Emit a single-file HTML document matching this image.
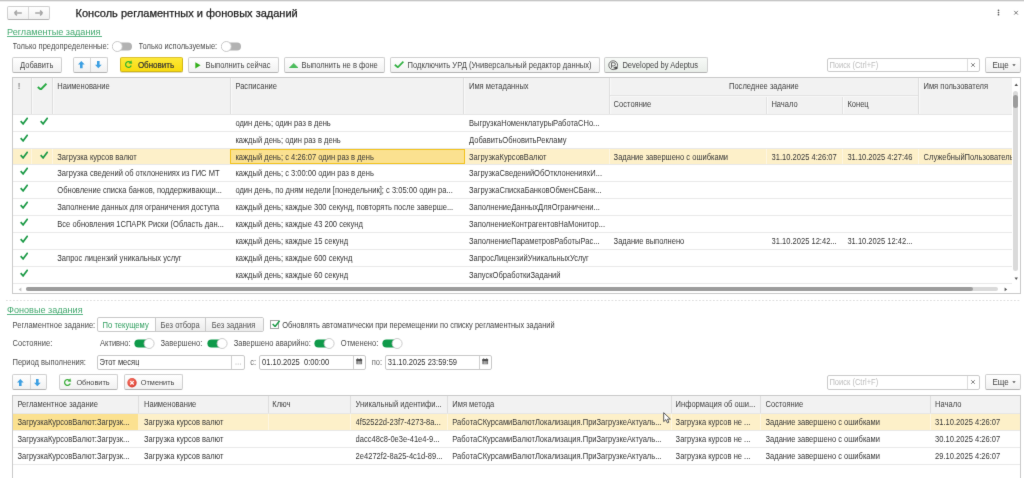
<!DOCTYPE html>
<html><head><meta charset="utf-8"><title>Консоль регламентных и фоновых заданий</title>
<style>
html,body{margin:0;padding:0;}
body{width:1024px;height:478px;position:relative;overflow:hidden;background:#fff;font-family:"Liberation Sans",sans-serif;font-size:7.5px;color:#4a4a4a;}
body>div,body>svg{position:absolute;}
#wrap{position:absolute;left:0;top:0;width:1024px;height:478px;overflow:hidden;filter:url(#bl);}
#wrap>div{position:absolute;}
</style></head><body><svg width="0" height="0" style="position:absolute;left:0;top:0"><filter id="bl" x="0" y="0" width="100%" height="100%" color-interpolation-filters="sRGB"><feConvolveMatrix order="3" kernelMatrix="0.0064 0.0672 0.0064 0.0672 0.7056 0.0672 0.0064 0.0672 0.0064" edgeMode="duplicate"/></filter></svg><div id="wrap">
<div style="left:0px;top:0px;width:1024px;height:1px;background:#c6c6c6;"></div>
<div style="left:0px;top:1px;width:1024px;height:1px;background:#ededed;"></div>
<div style="left:7px;top:6px;width:43px;height:14px;border:1px solid #d0d0d0;border-bottom-color:#b3b3b3;border-radius:2px;background:linear-gradient(#ffffff,#f1f1f1);box-sizing:border-box;"></div>
<div style="left:28px;top:7px;width:1px;height:12px;background:#d8d8d8;"></div>
<svg style="position:absolute;left:13px;top:9px;" width="10" height="8" viewBox="0 0 10 8"><path d="M1.4 4 L3.9 1.7 M1.4 4 L3.9 6.3 M1.6 4 H8.8" stroke="#a6a6a6" stroke-width="1.6" fill="none"/></svg>
<svg style="position:absolute;left:34px;top:9px;" width="10" height="8" viewBox="0 0 10 8"><path d="M8.6 4 L6.1 1.7 M8.6 4 L6.1 6.3 M8.4 4 H1.2" stroke="#a6a6a6" stroke-width="1.6" fill="none"/></svg>
<div style="left:75.6px;top:3px;line-height:20px;font-size:11px;color:#222;white-space:pre;overflow:hidden;-webkit-text-stroke:0.25px #222;">Консоль регламентных и фоновых заданий</div>
<svg style="position:absolute;left:996px;top:9px;" width="5" height="8" viewBox="0 0 5 8"><circle cx="2.5" cy="1.3" r="0.85" fill="#606060"/><circle cx="2.5" cy="3.5" r="0.85" fill="#606060"/><circle cx="2.5" cy="5.7" r="0.85" fill="#606060"/></svg>
<svg style="position:absolute;left:1013px;top:9.5px;" width="6" height="6" viewBox="0 0 6 6"><path d="M1.2 0.9 L4.9 4.6 M4.9 0.9 L1.2 4.6" stroke="#6a6a6a" stroke-width="0.9"/></svg>
<div style="left:7px;top:22px;line-height:20px;font-size:9.1px;color:#43a96f;white-space:pre;overflow:hidden;">Регламентые задания</div>
<div style="left:7px;top:36px;width:95px;height:1px;background:#5db686;"></div>
<div style="left:12.5px;top:37px;line-height:20px;font-size:7.55px;color:#4c4c4c;white-space:pre;overflow:hidden;transform:scaleY(1.1);transform-origin:0 12px;">Только предопределенные:</div>
<svg style="position:absolute;left:111.5px;top:40.5px;" width="22" height="12" viewBox="0 0 22 12"><rect x="4" y="1.6" width="16" height="7.8" rx="3.9" fill="#b2b2b2"/><circle cx="5.3" cy="5.5" r="5" fill="#fff" stroke="#c3c3c3" stroke-width="0.9"/></svg>
<div style="left:138.5px;top:37px;line-height:20px;font-size:7.55px;color:#4c4c4c;white-space:pre;overflow:hidden;transform:scaleY(1.1);transform-origin:0 12px;">Только используемые:</div>
<svg style="position:absolute;left:220.7px;top:40.5px;" width="22" height="12" viewBox="0 0 22 12"><rect x="4" y="1.6" width="16" height="7.8" rx="3.9" fill="#b2b2b2"/><circle cx="5.3" cy="5.5" r="5" fill="#fff" stroke="#c3c3c3" stroke-width="0.9"/></svg>
<div style="left:12px;top:57px;width:50px;height:16px;border:1px solid #d0d0d0;border-bottom-color:#b3b3b3;border-radius:2px;background:linear-gradient(#ffffff,#f1f1f1);box-sizing:border-box;"></div>
<div style="left:20px;top:56px;line-height:20px;font-size:7.55px;color:#474747;white-space:pre;overflow:hidden;transform:scaleY(1.1);transform-origin:0 12px;">Добавить</div>
<div style="left:73px;top:57px;width:35px;height:16px;border:1px solid #d0d0d0;border-bottom-color:#b3b3b3;border-radius:2px;background:linear-gradient(#ffffff,#f1f1f1);box-sizing:border-box;"></div>
<div style="left:90px;top:58px;width:1px;height:14px;background:#d6d6d6;"></div>
<svg style="position:absolute;left:78.2px;top:61.0px;" width="7" height="7.5" viewBox="0 0 7 7.5"><path d="M3.3 0 L6.7 3.6 H4.6 V7.3 H2.0 V3.6 H-0.1 Z" fill="#3c9fe2"/></svg>
<svg style="position:absolute;left:95.3px;top:61.0px;" width="7" height="7.5" viewBox="0 0 7 7.5"><path d="M3.3 7.3 L6.7 3.7 H4.6 V0 H2.0 V3.7 H-0.1 Z" fill="#3c9fe2"/></svg>
<div style="left:120px;top:57px;width:63px;height:15px;border:1px solid #d2b714;border-top-color:#dcc235;border-radius:2px;background:linear-gradient(#fde838,#f8db10);box-sizing:border-box;box-shadow:0 1px 0 rgba(120,100,0,0.25);"></div>
<svg style="position:absolute;left:124.1px;top:60.1px;" width="10" height="10" viewBox="0 0 10 10"><path d="M7.23 5.49 A2.9 2.9 0 1 1 6.36 2.28" stroke="#2eb22e" stroke-width="1.15" fill="none"/><path d="M7.9 3.55 L7.25 0.7 L4.95 3.3 Z" fill="#2eb22e" stroke="#2eb22e" stroke-width="0.4" stroke-linejoin="round"/></svg>
<div style="left:137.9px;top:56px;line-height:20px;font-size:8.0px;color:#333;white-space:pre;overflow:hidden;transform:scaleY(1.1);transform-origin:0 12px;-webkit-text-stroke:0.18px #333;">Обновить</div>
<div style="left:188px;top:57px;width:91px;height:16px;border:1px solid #d0d0d0;border-bottom-color:#b3b3b3;border-radius:2px;background:linear-gradient(#ffffff,#f1f1f1);box-sizing:border-box;"></div>
<svg style="position:absolute;left:194.8px;top:61.6px;" width="6" height="7" viewBox="0 0 6 7"><path d="M0.3 0.2 L5.6 3.3 L0.3 6.4 Z" fill="#35b01c"/></svg>
<div style="left:205.6px;top:56px;line-height:20px;font-size:7.55px;color:#474747;white-space:pre;overflow:hidden;transform:scaleY(1.1);transform-origin:0 12px;">Выполнить сейчас</div>
<div style="left:284px;top:57px;width:101px;height:16px;border:1px solid #d0d0d0;border-bottom-color:#b3b3b3;border-radius:2px;background:linear-gradient(#ffffff,#f1f1f1);box-sizing:border-box;"></div>
<svg style="position:absolute;left:288.8px;top:62.5px;" width="9.5" height="5.5" viewBox="0 0 9.5 5.5"><path d="M4.75 0.4 L9.1 4.9 H0.4 Z" fill="#4cbd5c" stroke="#44b554" stroke-width="0.7" stroke-linejoin="round"/></svg>
<div style="left:301.6px;top:56px;line-height:20px;font-size:7.55px;color:#474747;white-space:pre;overflow:hidden;transform:scaleY(1.1);transform-origin:0 12px;">Выполнить не в фоне</div>
<div style="left:390px;top:57px;width:210px;height:16px;border:1px solid #d0d0d0;border-bottom-color:#b3b3b3;border-radius:2px;background:linear-gradient(#ffffff,#f1f1f1);box-sizing:border-box;"></div>
<svg style="position:absolute;left:393.8px;top:60.8px;" width="10" height="7.3" viewBox="0 0 10 7.3"><path d="M0.80 3.80 L3.80 6.28 L9.40 0.73" stroke="#34b144" stroke-width="1.75" fill="none"/></svg>
<div style="left:407.6px;top:56px;line-height:20px;font-size:7.55px;color:#474747;white-space:pre;overflow:hidden;transform:scaleY(1.1);transform-origin:0 12px;">Подключить УРД (Универсальный редактор данных)</div>
<div style="left:604px;top:57px;width:104px;height:16px;border:1px solid #d0d0d0;border-bottom-color:#b3b3b3;border-radius:2px;background:linear-gradient(#f7faf7,#e9eee9);box-sizing:border-box;"></div>
<svg style="position:absolute;left:608.2px;top:59.6px;" width="11" height="11" viewBox="0 0 11 11"><circle cx="5.2" cy="5.2" r="4.4" stroke="#6a6a6a" stroke-width="1" fill="none"/><path d="M3.5 7.8 V2.7 H5.8 A1.6 1.6 0 0 1 5.8 5.9 H3.5" stroke="#6a6a6a" stroke-width="1" fill="none"/><path d="M5.6 7.9 H8.8 M7.5 6.6 L9.2 7.9 L7.5 9.2" stroke="#444" stroke-width="1.1" fill="none"/></svg>
<div style="left:622.4px;top:56px;line-height:20px;font-size:7.55px;color:#474747;white-space:pre;overflow:hidden;transform:scaleY(1.1);transform-origin:0 12px;">Developed by Adeptus</div>
<div style="left:827px;top:58px;width:153px;height:14px;border:1px solid #cbcbcb;border-radius:2px;background:#fff;box-sizing:border-box;"></div>
<div style="left:967px;top:59px;width:1px;height:12px;background:#dddddd;"></div>
<svg style="position:absolute;left:970px;top:62px;" width="6" height="6" viewBox="0 0 6 6"><path d="M1.2 1.2 L4.8 4.8 M4.8 1.2 L1.2 4.8" stroke="#777" stroke-width="0.9"/></svg>
<div style="left:829.4px;top:56px;line-height:20px;font-size:7.55px;color:#bdbdbd;white-space:pre;overflow:hidden;transform:scaleY(1.1);transform-origin:0 12px;">Поиск (Ctrl+F)</div>
<div style="left:985px;top:57px;width:36px;height:16px;border:1px solid #d0d0d0;border-bottom-color:#b3b3b3;border-radius:2px;background:linear-gradient(#ffffff,#f1f1f1);box-sizing:border-box;"></div>
<div style="left:992.5px;top:56px;line-height:20px;font-size:8px;color:#444;white-space:pre;overflow:hidden;transform:scaleY(1.1);transform-origin:0 12px;">Еще</div>
<svg style="position:absolute;left:1012.3px;top:64.3px;" width="4" height="3" viewBox="0 0 4 3"><path d="M0.3 0.3 H3.7 L2 2.3 Z" fill="#555"/></svg>
<div style="left:12px;top:77px;width:1009px;height:217px;border:1px solid #cacaca;box-sizing:border-box;background:#fff;"></div>
<div style="left:13px;top:78px;width:999px;height:36px;background:#f2f2f2;"></div>
<div style="left:13px;top:114px;width:999px;height:1px;background:#e6e6e6;"></div>
<div style="left:31px;top:78px;width:1px;height:36px;background:#dedede;"></div>
<div style="left:32px;top:78px;width:1px;height:36px;background:#f9f9f9;"></div>
<div style="left:52px;top:78px;width:1px;height:36px;background:#dedede;"></div>
<div style="left:53px;top:78px;width:1px;height:36px;background:#f9f9f9;"></div>
<div style="left:230px;top:78px;width:1px;height:36px;background:#dedede;"></div>
<div style="left:231px;top:78px;width:1px;height:36px;background:#f9f9f9;"></div>
<div style="left:463px;top:78px;width:1px;height:36px;background:#dedede;"></div>
<div style="left:464px;top:78px;width:1px;height:36px;background:#f9f9f9;"></div>
<div style="left:609px;top:78px;width:1px;height:36px;background:#dedede;"></div>
<div style="left:610px;top:78px;width:1px;height:36px;background:#f9f9f9;"></div>
<div style="left:918px;top:78px;width:1px;height:36px;background:#dedede;"></div>
<div style="left:919px;top:78px;width:1px;height:36px;background:#f9f9f9;"></div>
<div style="left:610px;top:95px;width:308px;height:1px;background:#e3e3e3;"></div>
<div style="left:610px;top:96px;width:308px;height:1px;background:#f7f7f7;"></div>
<div style="left:766px;top:97px;width:1px;height:17px;background:#e2e2e2;"></div>
<div style="left:767px;top:97px;width:1px;height:17px;background:#f9f9f9;"></div>
<div style="left:842px;top:97px;width:1px;height:17px;background:#e2e2e2;"></div>
<div style="left:843px;top:97px;width:1px;height:17px;background:#f9f9f9;"></div>
<div style="left:18px;top:77px;line-height:20px;font-size:7.55px;color:#474747;white-space:pre;overflow:hidden;transform:scaleY(1.1);transform-origin:0 12px;">!</div>
<svg style="position:absolute;left:37.2px;top:82.6px;" width="10" height="7.6" viewBox="0 0 10 7.6"><path d="M0.80 3.95 L3.80 6.54 L9.40 0.76" stroke="#2aab45" stroke-width="1.9" fill="none"/></svg>
<div style="left:57.3px;top:77px;line-height:20px;font-size:7.55px;color:#424242;white-space:pre;overflow:hidden;transform:scaleY(1.1);transform-origin:0 12px;">Наименование</div>
<div style="left:235.4px;top:77px;line-height:20px;font-size:7.55px;color:#424242;white-space:pre;overflow:hidden;transform:scaleY(1.1);transform-origin:0 12px;">Расписание</div>
<div style="left:469px;top:77px;line-height:20px;font-size:7.55px;color:#424242;white-space:pre;overflow:hidden;transform:scaleY(1.1);transform-origin:0 12px;">Имя метаданных</div>
<div style="left:729px;top:77px;line-height:20px;font-size:7.55px;color:#424242;white-space:pre;overflow:hidden;transform:scaleY(1.1);transform-origin:0 12px;">Последнее задание</div>
<div style="left:923.5px;top:77px;line-height:20px;font-size:7.55px;color:#424242;white-space:pre;overflow:hidden;transform:scaleY(1.1);transform-origin:0 12px;">Имя пользователя</div>
<div style="left:613.6px;top:95px;line-height:20px;font-size:7.55px;color:#424242;white-space:pre;overflow:hidden;transform:scaleY(1.1);transform-origin:0 12px;">Состояние</div>
<div style="left:771.4px;top:95px;line-height:20px;font-size:7.55px;color:#424242;white-space:pre;overflow:hidden;transform:scaleY(1.1);transform-origin:0 12px;">Начало</div>
<div style="left:847.4px;top:95px;line-height:20px;font-size:7.55px;color:#424242;white-space:pre;overflow:hidden;transform:scaleY(1.1);transform-origin:0 12px;">Конец</div>
<div style="left:13px;top:131px;width:999px;height:1px;background:#e9e9e9;"></div>
<svg style="position:absolute;left:19.7px;top:117.0px;" width="8.2" height="8" viewBox="0 0 8.2 8"><path d="M0.66 4.16 L3.12 6.88 L7.71 0.80" stroke="#1e9b48" stroke-width="1.7" fill="none"/></svg>
<svg style="position:absolute;left:39.5px;top:117.0px;" width="8.2" height="8" viewBox="0 0 8.2 8"><path d="M0.66 4.16 L3.12 6.88 L7.71 0.80" stroke="#1e9b48" stroke-width="1.7" fill="none"/></svg>
<div style="left:235.4px;top:114px;width:226.6px;line-height:20px;font-size:7.55px;color:#363636;white-space:pre;overflow:hidden;transform:scaleY(1.1);transform-origin:0 12px;">один день; один раз в день</div>
<div style="left:469px;top:114px;width:139px;line-height:20px;font-size:7.55px;color:#363636;white-space:pre;overflow:hidden;transform:scaleY(1.1);transform-origin:0 12px;">ВыгрузкаНоменклатурыРаботаСНо...</div>
<div style="left:13px;top:148px;width:999px;height:1px;background:#e9e9e9;"></div>
<svg style="position:absolute;left:19.7px;top:134.0px;" width="8.2" height="8" viewBox="0 0 8.2 8"><path d="M0.66 4.16 L3.12 6.88 L7.71 0.80" stroke="#1e9b48" stroke-width="1.7" fill="none"/></svg>
<div style="left:235.4px;top:131px;width:226.6px;line-height:20px;font-size:7.55px;color:#363636;white-space:pre;overflow:hidden;transform:scaleY(1.1);transform-origin:0 12px;">каждый день; один раз в день</div>
<div style="left:469px;top:131px;width:139px;line-height:20px;font-size:7.55px;color:#363636;white-space:pre;overflow:hidden;transform:scaleY(1.1);transform-origin:0 12px;">ДобавитьОбновитьРекламу</div>
<div style="left:13px;top:149px;width:999px;height:15px;background:#fdf0c9;"></div>
<div style="left:31px;top:149px;width:1px;height:15px;background:#fdf6e2;"></div>
<div style="left:52px;top:149px;width:1px;height:15px;background:#fdf6e2;"></div>
<div style="left:609px;top:149px;width:1px;height:15px;background:#fdf6e2;"></div>
<div style="left:766px;top:149px;width:1px;height:15px;background:#fdf6e2;"></div>
<div style="left:842px;top:149px;width:1px;height:15px;background:#fdf6e2;"></div>
<div style="left:918px;top:149px;width:1px;height:15px;background:#fdf6e2;"></div>
<div style="left:230px;top:149px;width:235px;height:15px;background:#fbe190;border:1px solid #f2c21c;box-sizing:border-box;"></div>
<div style="left:13px;top:164px;width:999px;height:1px;background:#e9e9e9;"></div>
<svg style="position:absolute;left:19.7px;top:151.0px;" width="8.2" height="8" viewBox="0 0 8.2 8"><path d="M0.66 4.16 L3.12 6.88 L7.71 0.80" stroke="#1e9b48" stroke-width="1.7" fill="none"/></svg>
<svg style="position:absolute;left:39.5px;top:151.0px;" width="8.2" height="8" viewBox="0 0 8.2 8"><path d="M0.66 4.16 L3.12 6.88 L7.71 0.80" stroke="#1e9b48" stroke-width="1.7" fill="none"/></svg>
<div style="left:57.3px;top:148px;width:171.7px;line-height:20px;font-size:7.55px;color:#363636;white-space:pre;overflow:hidden;transform:scaleY(1.1);transform-origin:0 12px;">Загрузка курсов валют</div>
<div style="left:235.4px;top:148px;width:226.6px;line-height:20px;font-size:7.55px;color:#363636;white-space:pre;overflow:hidden;transform:scaleY(1.1);transform-origin:0 12px;">каждый день; с 4:26:07 один раз в день</div>
<div style="left:469px;top:148px;width:139px;line-height:20px;font-size:7.55px;color:#363636;white-space:pre;overflow:hidden;transform:scaleY(1.1);transform-origin:0 12px;">ЗагрузкаКурсовВалют</div>
<div style="left:613.6px;top:148px;width:151.39999999999998px;line-height:20px;font-size:7.55px;color:#363636;white-space:pre;overflow:hidden;transform:scaleY(1.1);transform-origin:0 12px;">Задание завершено с ошибками</div>
<div style="left:771.6px;top:148px;width:69.39999999999998px;line-height:20px;font-size:7.55px;color:#363636;white-space:pre;overflow:hidden;transform:scaleY(1.1);transform-origin:0 12px;">31.10.2025 4:26:07</div>
<div style="left:847.4px;top:148px;width:69.60000000000002px;line-height:20px;font-size:7.55px;color:#363636;white-space:pre;overflow:hidden;transform:scaleY(1.1);transform-origin:0 12px;">31.10.2025 4:27:46</div>
<div style="left:923.6px;top:148px;width:88.39999999999998px;line-height:20px;font-size:7.55px;color:#363636;white-space:pre;overflow:hidden;transform:scaleY(1.1);transform-origin:0 12px;">СлужебныйПользователь</div>
<div style="left:13px;top:181px;width:999px;height:1px;background:#e9e9e9;"></div>
<svg style="position:absolute;left:19.7px;top:167.0px;" width="8.2" height="8" viewBox="0 0 8.2 8"><path d="M0.66 4.16 L3.12 6.88 L7.71 0.80" stroke="#1e9b48" stroke-width="1.7" fill="none"/></svg>
<div style="left:57.3px;top:164px;width:171.7px;line-height:20px;font-size:7.55px;color:#363636;white-space:pre;overflow:hidden;transform:scaleY(1.1);transform-origin:0 12px;">Загрузка сведений об отклонениях из ГИС МТ</div>
<div style="left:235.4px;top:164px;width:226.6px;line-height:20px;font-size:7.55px;color:#363636;white-space:pre;overflow:hidden;transform:scaleY(1.1);transform-origin:0 12px;">каждый день; с 3:00:00 один раз в день</div>
<div style="left:469px;top:164px;width:139px;line-height:20px;font-size:7.55px;color:#363636;white-space:pre;overflow:hidden;transform:scaleY(1.1);transform-origin:0 12px;">ЗагрузкаСведенийОбОтклоненияхИ...</div>
<div style="left:13px;top:198px;width:999px;height:1px;background:#e9e9e9;"></div>
<svg style="position:absolute;left:19.7px;top:184.0px;" width="8.2" height="8" viewBox="0 0 8.2 8"><path d="M0.66 4.16 L3.12 6.88 L7.71 0.80" stroke="#1e9b48" stroke-width="1.7" fill="none"/></svg>
<div style="left:57.3px;top:181px;width:171.7px;line-height:20px;font-size:7.55px;color:#363636;white-space:pre;overflow:hidden;transform:scaleY(1.1);transform-origin:0 12px;">Обновление списка банков, поддерживающи...</div>
<div style="left:235.4px;top:181px;width:226.6px;line-height:20px;font-size:7.55px;color:#363636;white-space:pre;overflow:hidden;transform:scaleY(1.1);transform-origin:0 12px;">один день, по дням недели [понедельник]; с 3:05:00 один ра...</div>
<div style="left:469px;top:181px;width:139px;line-height:20px;font-size:7.55px;color:#363636;white-space:pre;overflow:hidden;transform:scaleY(1.1);transform-origin:0 12px;">ЗагрузкаСпискаБанковОбменСБанк...</div>
<div style="left:13px;top:215px;width:999px;height:1px;background:#e9e9e9;"></div>
<svg style="position:absolute;left:19.7px;top:201.0px;" width="8.2" height="8" viewBox="0 0 8.2 8"><path d="M0.66 4.16 L3.12 6.88 L7.71 0.80" stroke="#1e9b48" stroke-width="1.7" fill="none"/></svg>
<div style="left:57.3px;top:198px;width:171.7px;line-height:20px;font-size:7.55px;color:#363636;white-space:pre;overflow:hidden;transform:scaleY(1.1);transform-origin:0 12px;">Заполнение данных для ограничения доступа</div>
<div style="left:235.4px;top:198px;width:226.6px;line-height:20px;font-size:7.55px;color:#363636;white-space:pre;overflow:hidden;transform:scaleY(1.1);transform-origin:0 12px;">каждый день; каждые 300 секунд, повторять после заверше...</div>
<div style="left:469px;top:198px;width:139px;line-height:20px;font-size:7.55px;color:#363636;white-space:pre;overflow:hidden;transform:scaleY(1.1);transform-origin:0 12px;">ЗаполнениеДанныхДляОграничени...</div>
<div style="left:13px;top:232px;width:999px;height:1px;background:#e9e9e9;"></div>
<svg style="position:absolute;left:19.7px;top:218.0px;" width="8.2" height="8" viewBox="0 0 8.2 8"><path d="M0.66 4.16 L3.12 6.88 L7.71 0.80" stroke="#1e9b48" stroke-width="1.7" fill="none"/></svg>
<div style="left:57.3px;top:215px;width:171.7px;line-height:20px;font-size:7.55px;color:#363636;white-space:pre;overflow:hidden;transform:scaleY(1.1);transform-origin:0 12px;">Все обновления 1СПАРК Риски (Область дан...</div>
<div style="left:235.4px;top:215px;width:226.6px;line-height:20px;font-size:7.55px;color:#363636;white-space:pre;overflow:hidden;transform:scaleY(1.1);transform-origin:0 12px;">каждый день; каждые 43 200 секунд</div>
<div style="left:469px;top:215px;width:139px;line-height:20px;font-size:7.55px;color:#363636;white-space:pre;overflow:hidden;transform:scaleY(1.1);transform-origin:0 12px;">ЗаполнениеКонтрагентовНаМонитор...</div>
<div style="left:13px;top:249px;width:999px;height:1px;background:#e9e9e9;"></div>
<svg style="position:absolute;left:19.7px;top:235.0px;" width="8.2" height="8" viewBox="0 0 8.2 8"><path d="M0.66 4.16 L3.12 6.88 L7.71 0.80" stroke="#1e9b48" stroke-width="1.7" fill="none"/></svg>
<div style="left:235.4px;top:232px;width:226.6px;line-height:20px;font-size:7.55px;color:#363636;white-space:pre;overflow:hidden;transform:scaleY(1.1);transform-origin:0 12px;">каждый день; каждые 15 секунд</div>
<div style="left:469px;top:232px;width:139px;line-height:20px;font-size:7.55px;color:#363636;white-space:pre;overflow:hidden;transform:scaleY(1.1);transform-origin:0 12px;">ЗаполнениеПараметровРаботыРас...</div>
<div style="left:613.6px;top:232px;width:151.39999999999998px;line-height:20px;font-size:7.55px;color:#363636;white-space:pre;overflow:hidden;transform:scaleY(1.1);transform-origin:0 12px;">Задание выполнено</div>
<div style="left:771.6px;top:232px;width:69.39999999999998px;line-height:20px;font-size:7.55px;color:#363636;white-space:pre;overflow:hidden;transform:scaleY(1.1);transform-origin:0 12px;">31.10.2025 12:42...</div>
<div style="left:847.4px;top:232px;width:69.60000000000002px;line-height:20px;font-size:7.55px;color:#363636;white-space:pre;overflow:hidden;transform:scaleY(1.1);transform-origin:0 12px;">31.10.2025 12:42...</div>
<div style="left:13px;top:266px;width:999px;height:1px;background:#e9e9e9;"></div>
<svg style="position:absolute;left:19.7px;top:252.0px;" width="8.2" height="8" viewBox="0 0 8.2 8"><path d="M0.66 4.16 L3.12 6.88 L7.71 0.80" stroke="#1e9b48" stroke-width="1.7" fill="none"/></svg>
<div style="left:57.3px;top:249px;width:171.7px;line-height:20px;font-size:7.55px;color:#363636;white-space:pre;overflow:hidden;transform:scaleY(1.1);transform-origin:0 12px;">Запрос лицензий уникальных услуг</div>
<div style="left:235.4px;top:249px;width:226.6px;line-height:20px;font-size:7.55px;color:#363636;white-space:pre;overflow:hidden;transform:scaleY(1.1);transform-origin:0 12px;">каждый день; каждые 600 секунд</div>
<div style="left:469px;top:249px;width:139px;line-height:20px;font-size:7.55px;color:#363636;white-space:pre;overflow:hidden;transform:scaleY(1.1);transform-origin:0 12px;">ЗапросЛицензийУникальныхУслуг</div>
<div style="left:13px;top:283px;width:999px;height:1px;background:#e9e9e9;"></div>
<svg style="position:absolute;left:19.7px;top:269.0px;" width="8.2" height="8" viewBox="0 0 8.2 8"><path d="M0.66 4.16 L3.12 6.88 L7.71 0.80" stroke="#1e9b48" stroke-width="1.7" fill="none"/></svg>
<div style="left:235.4px;top:266px;width:226.6px;line-height:20px;font-size:7.55px;color:#363636;white-space:pre;overflow:hidden;transform:scaleY(1.1);transform-origin:0 12px;">каждый день; каждые 60 секунд</div>
<div style="left:469px;top:266px;width:139px;line-height:20px;font-size:7.55px;color:#363636;white-space:pre;overflow:hidden;transform:scaleY(1.1);transform-origin:0 12px;">ЗапускОбработкиЗаданий</div>
<div style="left:1013px;top:91px;width:5px;height:180px;background:#dadada;border-radius:2.5px;"></div>
<div style="left:1013px;top:95px;width:5px;height:13px;background:#9c9c9c;border-radius:2.5px;"></div>
<svg style="position:absolute;left:1013.5px;top:83px;" width="5" height="4" viewBox="0 0 5 4"><path d="M0.5 3 H4 L2.25 0.6 Z" fill="#555"/></svg>
<svg style="position:absolute;left:1013.5px;top:276.8px;" width="5" height="4" viewBox="0 0 5 4"><path d="M0.5 0.6 H4 L2.25 3 Z" fill="#555"/></svg>
<div style="left:26px;top:287px;width:972px;height:4px;background:#dadada;border-radius:2px;"></div>
<div style="left:26px;top:287px;width:947px;height:4px;background:#9c9c9c;border-radius:2px;"></div>
<svg style="position:absolute;left:17.6px;top:286.6px;" width="4" height="5" viewBox="0 0 4 5"><path d="M3.4 0.4 V4.6 L0.6 2.5 Z" fill="#c4c4c4"/></svg>
<svg style="position:absolute;left:1003.6px;top:286.8px;" width="4" height="5" viewBox="0 0 4 5"><path d="M0.6 0.6 V4.2 L3.1 2.4 Z" fill="#555"/></svg>
<svg style="position:absolute;left:6px;top:300px;" width="1014" height="1" viewBox="0 0 1014 1"><path d="M0 0.5 H1014" stroke="#dedede" stroke-width="1" stroke-dasharray="1.75 1.75"/></svg>
<div style="left:7px;top:300px;line-height:20px;font-size:9.1px;color:#43a96f;white-space:pre;overflow:hidden;">Фоновые задания</div>
<div style="left:7px;top:314px;width:76px;height:1px;background:#5db686;"></div>
<div style="left:12.5px;top:316px;line-height:20px;font-size:7.55px;color:#4c4c4c;white-space:pre;overflow:hidden;transform:scaleY(1.1);transform-origin:0 12px;">Регламентное задание:</div>
<div style="left:97px;top:317px;width:167px;height:15px;border:1px solid #c9c9c9;border-radius:2px;background:#fff;box-sizing:border-box;"></div>
<div style="left:156px;top:318px;width:107px;height:13px;background:linear-gradient(#fafafa,#ececec);border-radius:0 1px 1px 0;"></div>
<div style="left:155px;top:318px;width:1px;height:13px;background:#c9c9c9;"></div>
<div style="left:205px;top:318px;width:1px;height:13px;background:#c9c9c9;"></div>
<div style="left:102.6px;top:316px;line-height:20px;font-size:7.6px;color:#2f9e5e;white-space:pre;overflow:hidden;transform:scaleY(1.1);transform-origin:0 12px;">По текущему</div>
<div style="left:160.5px;top:316px;line-height:20px;font-size:7.6px;color:#555;white-space:pre;overflow:hidden;transform:scaleY(1.1);transform-origin:0 12px;">Без отбора</div>
<div style="left:211.8px;top:316px;line-height:20px;font-size:7.6px;color:#555;white-space:pre;overflow:hidden;transform:scaleY(1.1);transform-origin:0 12px;">Без задания</div>
<div style="left:270px;top:320px;width:9px;height:9px;border:1px solid #a4a4a4;background:#fff;box-sizing:border-box;"></div>
<svg style="position:absolute;left:271.6px;top:319.9px;" width="8.2" height="7.6" viewBox="0 0 8.2 7.6"><path d="M0.66 3.95 L3.12 6.54 L7.71 0.76" stroke="#1c9b48" stroke-width="1.5" fill="none"/></svg>
<div style="left:282.2px;top:316px;line-height:20px;font-size:7.45px;color:#444;white-space:pre;overflow:hidden;transform:scaleY(1.1);transform-origin:0 12px;">Обновлять автоматически при перемещении по списку регламентных заданий</div>
<div style="left:12.5px;top:334px;line-height:20px;font-size:7.55px;color:#4c4c4c;white-space:pre;overflow:hidden;transform:scaleY(1.1);transform-origin:0 12px;">Состояние:</div>
<div style="left:100px;top:334px;line-height:20px;font-size:7.55px;color:#4c4c4c;white-space:pre;overflow:hidden;transform:scaleY(1.1);transform-origin:0 12px;">Активно:</div>
<svg style="position:absolute;left:134.2px;top:337.8px;" width="22" height="12" viewBox="0 0 22 12"><rect x="0.4" y="1.4" width="16" height="8.2" rx="4.1" fill="#0f9a4a"/><circle cx="15.1" cy="5.5" r="5" fill="#fff" stroke="#c6c6c6" stroke-width="0.9"/></svg>
<div style="left:160.5px;top:334px;line-height:20px;font-size:7.55px;color:#4c4c4c;white-space:pre;overflow:hidden;transform:scaleY(1.1);transform-origin:0 12px;">Завершено:</div>
<svg style="position:absolute;left:206.6px;top:337.8px;" width="22" height="12" viewBox="0 0 22 12"><rect x="0.4" y="1.4" width="16" height="8.2" rx="4.1" fill="#0f9a4a"/><circle cx="15.1" cy="5.5" r="5" fill="#fff" stroke="#c6c6c6" stroke-width="0.9"/></svg>
<div style="left:233.7px;top:334px;line-height:20px;font-size:7.55px;color:#4c4c4c;white-space:pre;overflow:hidden;transform:scaleY(1.1);transform-origin:0 12px;">Завершено аварийно:</div>
<svg style="position:absolute;left:314.2px;top:337.8px;" width="22" height="12" viewBox="0 0 22 12"><rect x="0.4" y="1.4" width="16" height="8.2" rx="4.1" fill="#0f9a4a"/><circle cx="15.1" cy="5.5" r="5" fill="#fff" stroke="#c6c6c6" stroke-width="0.9"/></svg>
<div style="left:340.8px;top:334px;line-height:20px;font-size:7.55px;color:#4c4c4c;white-space:pre;overflow:hidden;transform:scaleY(1.1);transform-origin:0 12px;">Отменено:</div>
<svg style="position:absolute;left:381.8px;top:337.8px;" width="22" height="12" viewBox="0 0 22 12"><rect x="0.4" y="1.4" width="16" height="8.2" rx="4.1" fill="#0f9a4a"/><circle cx="15.1" cy="5.5" r="5" fill="#fff" stroke="#c6c6c6" stroke-width="0.9"/></svg>
<div style="left:12.5px;top:353px;line-height:20px;font-size:7.55px;color:#4c4c4c;white-space:pre;overflow:hidden;transform:scaleY(1.1);transform-origin:0 12px;">Период выполнения:</div>
<div style="left:97px;top:355px;width:148px;height:15px;border:1px solid #c9c9c9;border-radius:2px;background:#fff;box-sizing:border-box;"></div>
<div style="left:231px;top:356px;width:1px;height:13px;background:#cfcfcf;"></div>
<div style="left:99.5px;top:353px;line-height:20px;font-size:7.55px;color:#333;white-space:pre;overflow:hidden;transform:scaleY(1.1);transform-origin:0 12px;">Этот месяц</div>
<svg style="position:absolute;left:234.5px;top:362.8px;" width="7" height="2" viewBox="0 0 7 2"><circle cx="1" cy="1" r="0.55" fill="#aaa"/><circle cx="3.2" cy="1" r="0.55" fill="#aaa"/><circle cx="5.4" cy="1" r="0.55" fill="#aaa"/></svg>
<div style="left:250.2px;top:353px;line-height:20px;font-size:7.55px;color:#666;white-space:pre;overflow:hidden;transform:scaleY(1.1);transform-origin:0 12px;">с:</div>
<div style="left:259px;top:355px;width:107px;height:15px;border:1px solid #c9c9c9;border-radius:2px;background:#fff;box-sizing:border-box;"></div>
<div style="left:353px;top:356px;width:1px;height:13px;background:#cfcfcf;"></div>
<div style="left:262px;top:353px;line-height:20px;font-size:7.55px;color:#333;white-space:pre;overflow:hidden;transform:scaleY(1.1);transform-origin:0 12px;">01.10.2025  0:00:00</div>
<svg style="position:absolute;left:356.4px;top:357.6px;" width="7" height="7" viewBox="0 0 7 7"><rect x="0.3" y="1.2" width="5.8" height="5" rx="0.5" fill="#777"/><rect x="0.3" y="1.2" width="5.8" height="1.6" fill="#444"/><path d="M1.2 4.1 H5.2 M1.2 5.3 H5.2 M2.5 3 V6 M3.9 3 V6" stroke="#cfcfcf" stroke-width="0.4"/><path d="M1.7 0.2 V1.8 M4.7 0.2 V1.8" stroke="#555" stroke-width="0.8"/></svg>
<div style="left:371.7px;top:353px;line-height:20px;font-size:7.55px;color:#666;white-space:pre;overflow:hidden;transform:scaleY(1.1);transform-origin:0 12px;">по:</div>
<div style="left:385px;top:355px;width:107px;height:15px;border:1px solid #c9c9c9;border-radius:2px;background:#fff;box-sizing:border-box;"></div>
<div style="left:479px;top:356px;width:1px;height:13px;background:#cfcfcf;"></div>
<div style="left:387.8px;top:353px;line-height:20px;font-size:7.55px;color:#333;white-space:pre;overflow:hidden;transform:scaleY(1.1);transform-origin:0 12px;">31.10.2025 23:59:59</div>
<svg style="position:absolute;left:482.4px;top:357.6px;" width="7" height="7" viewBox="0 0 7 7"><rect x="0.3" y="1.2" width="5.8" height="5" rx="0.5" fill="#777"/><rect x="0.3" y="1.2" width="5.8" height="1.6" fill="#444"/><path d="M1.2 4.1 H5.2 M1.2 5.3 H5.2 M2.5 3 V6 M3.9 3 V6" stroke="#cfcfcf" stroke-width="0.4"/><path d="M1.7 0.2 V1.8 M4.7 0.2 V1.8" stroke="#555" stroke-width="0.8"/></svg>
<div style="left:12px;top:374px;width:35px;height:16px;border:1px solid #d0d0d0;border-bottom-color:#b3b3b3;border-radius:2px;background:linear-gradient(#ffffff,#f1f1f1);box-sizing:border-box;"></div>
<div style="left:30px;top:375px;width:1px;height:14px;background:#d6d6d6;"></div>
<svg style="position:absolute;left:17.4px;top:378.7px;" width="7" height="7.5" viewBox="0 0 7 7.5"><path d="M3.3 0 L6.7 3.6 H4.6 V7.3 H2.0 V3.6 H-0.1 Z" fill="#3c9fe2"/></svg>
<svg style="position:absolute;left:34.3px;top:378.7px;" width="7" height="7.5" viewBox="0 0 7 7.5"><path d="M3.3 7.3 L6.7 3.7 H4.6 V0 H2.0 V3.7 H-0.1 Z" fill="#3c9fe2"/></svg>
<div style="left:59px;top:374px;width:59px;height:16px;border:1px solid #d0d0d0;border-bottom-color:#b3b3b3;border-radius:2px;background:linear-gradient(#ffffff,#f1f1f1);box-sizing:border-box;"></div>
<svg style="position:absolute;left:63.3px;top:378.3px;" width="10" height="10" viewBox="0 0 10 10"><path d="M7.23 5.49 A2.9 2.9 0 1 1 6.36 2.28" stroke="#3aae3a" stroke-width="1.25" fill="none"/><path d="M7.9 3.55 L7.25 0.7 L4.95 3.3 Z" fill="#3aae3a" stroke="#3aae3a" stroke-width="0.4" stroke-linejoin="round"/></svg>
<div style="left:76.4px;top:373px;line-height:20px;font-size:7.35px;color:#474747;white-space:pre;overflow:hidden;transform:scaleY(1.1);transform-origin:0 12px;">Обновить</div>
<div style="left:124px;top:374px;width:59px;height:16px;border:1px solid #d0d0d0;border-bottom-color:#b3b3b3;border-radius:2px;background:linear-gradient(#ffffff,#f1f1f1);box-sizing:border-box;"></div>
<svg style="position:absolute;left:127.3px;top:377.6px;" width="10" height="10" viewBox="0 0 10 10"><defs><radialGradient id="rg" cx="0.4" cy="0.35" r="0.7"><stop offset="0" stop-color="#f77a6a"/><stop offset="1" stop-color="#d93a2e"/></radialGradient></defs><circle cx="5" cy="4.8" r="4.7" fill="url(#rg)"/><path d="M3.3 3.1 L6.7 6.5 M6.7 3.1 L3.3 6.5" stroke="#fff" stroke-width="1.15"/></svg>
<div style="left:140.8px;top:373px;line-height:20px;font-size:7.35px;color:#474747;white-space:pre;overflow:hidden;transform:scaleY(1.1);transform-origin:0 12px;">Отменить</div>
<div style="left:827px;top:375px;width:153px;height:15px;border:1px solid #cbcbcb;border-radius:2px;background:#fff;box-sizing:border-box;"></div>
<div style="left:967px;top:376px;width:1px;height:13px;background:#dddddd;"></div>
<svg style="position:absolute;left:970px;top:379px;" width="6" height="6" viewBox="0 0 6 6"><path d="M1.2 1.2 L4.8 4.8 M4.8 1.2 L1.2 4.8" stroke="#777" stroke-width="0.9"/></svg>
<div style="left:829.4px;top:373px;line-height:20px;font-size:7.55px;color:#bdbdbd;white-space:pre;overflow:hidden;transform:scaleY(1.1);transform-origin:0 12px;">Поиск (Ctrl+F)</div>
<div style="left:985px;top:374px;width:36px;height:16px;border:1px solid #d0d0d0;border-bottom-color:#b3b3b3;border-radius:2px;background:linear-gradient(#ffffff,#f1f1f1);box-sizing:border-box;"></div>
<div style="left:992.5px;top:373px;line-height:20px;font-size:8px;color:#444;white-space:pre;overflow:hidden;transform:scaleY(1.1);transform-origin:0 12px;">Еще</div>
<svg style="position:absolute;left:1012.3px;top:381.3px;" width="4" height="3" viewBox="0 0 4 3"><path d="M0.3 0.3 H3.7 L2 2.3 Z" fill="#555"/></svg>
<div style="left:12px;top:395px;width:1009px;height:90px;border:1px solid #cacaca;box-sizing:border-box;background:#fff;"></div>
<div style="left:13px;top:396px;width:1007px;height:17px;background:#f2f2f2;"></div>
<div style="left:13px;top:413px;width:1007px;height:1px;background:#e6e6e6;"></div>
<div style="left:138px;top:396px;width:1px;height:17px;background:#dedede;"></div>
<div style="left:268px;top:396px;width:1px;height:17px;background:#dedede;"></div>
<div style="left:350px;top:396px;width:1px;height:17px;background:#dedede;"></div>
<div style="left:447px;top:396px;width:1px;height:17px;background:#dedede;"></div>
<div style="left:671px;top:396px;width:1px;height:17px;background:#dedede;"></div>
<div style="left:760px;top:396px;width:1px;height:17px;background:#dedede;"></div>
<div style="left:930px;top:396px;width:1px;height:17px;background:#dedede;"></div>
<div style="left:17.4px;top:395px;width:120.6px;line-height:20px;font-size:7.55px;color:#424242;white-space:pre;overflow:hidden;transform:scaleY(1.1);transform-origin:0 12px;">Регламентное задание</div>
<div style="left:144px;top:395px;width:124px;line-height:20px;font-size:7.55px;color:#424242;white-space:pre;overflow:hidden;transform:scaleY(1.1);transform-origin:0 12px;">Наименование</div>
<div style="left:272.3px;top:395px;width:77.69999999999999px;line-height:20px;font-size:7.55px;color:#424242;white-space:pre;overflow:hidden;transform:scaleY(1.1);transform-origin:0 12px;">Ключ</div>
<div style="left:355.6px;top:395px;width:91.39999999999998px;line-height:20px;font-size:7.55px;color:#424242;white-space:pre;overflow:hidden;transform:scaleY(1.1);transform-origin:0 12px;">Уникальный идентифи...</div>
<div style="left:452.3px;top:395px;width:218.7px;line-height:20px;font-size:7.55px;color:#424242;white-space:pre;overflow:hidden;transform:scaleY(1.1);transform-origin:0 12px;">Имя метода</div>
<div style="left:675.6px;top:395px;width:84.39999999999998px;line-height:20px;font-size:7.55px;color:#424242;white-space:pre;overflow:hidden;transform:scaleY(1.1);transform-origin:0 12px;">Информация об оши...</div>
<div style="left:765.5px;top:395px;width:164.5px;line-height:20px;font-size:7.55px;color:#424242;white-space:pre;overflow:hidden;transform:scaleY(1.1);transform-origin:0 12px;">Состояние</div>
<div style="left:935.1px;top:395px;width:84.89999999999998px;line-height:20px;font-size:7.55px;color:#424242;white-space:pre;overflow:hidden;transform:scaleY(1.1);transform-origin:0 12px;">Начало</div>
<div style="left:13px;top:414px;width:1007px;height:16px;background:#fdf0c9;"></div>
<div style="left:268px;top:414px;width:1px;height:16px;background:#fdf6e2;"></div>
<div style="left:350px;top:414px;width:1px;height:16px;background:#fdf6e2;"></div>
<div style="left:447px;top:414px;width:1px;height:16px;background:#fdf6e2;"></div>
<div style="left:671px;top:414px;width:1px;height:16px;background:#fdf6e2;"></div>
<div style="left:760px;top:414px;width:1px;height:16px;background:#fdf6e2;"></div>
<div style="left:930px;top:414px;width:1px;height:16px;background:#fdf6e2;"></div>
<div style="left:13px;top:414px;width:125px;height:16px;background:#fbe190;"></div>
<div style="left:13px;top:430px;width:1007px;height:1px;background:#e9e9e9;"></div>
<div style="left:17.4px;top:413px;width:120.6px;line-height:20px;font-size:7.55px;color:#363636;white-space:pre;overflow:hidden;transform:scaleY(1.1);transform-origin:0 12px;">ЗагрузкаКурсовВалют:Загрузк...</div>
<div style="left:144px;top:413px;width:124px;line-height:20px;font-size:7.55px;color:#363636;white-space:pre;overflow:hidden;transform:scaleY(1.1);transform-origin:0 12px;">Загрузка курсов валют</div>
<div style="left:355.6px;top:413px;width:91.39999999999998px;line-height:20px;font-size:7.55px;color:#363636;white-space:pre;overflow:hidden;transform:scaleY(1.1);transform-origin:0 12px;">4f52522d-23f7-4273-8a...</div>
<div style="left:452.3px;top:413px;width:218.7px;line-height:20px;font-size:7.55px;color:#363636;white-space:pre;overflow:hidden;transform:scaleY(1.1);transform-origin:0 12px;">РаботаСКурсамиВалютЛокализация.ПриЗагрузкеАктуаль...</div>
<div style="left:675.6px;top:413px;width:84.39999999999998px;line-height:20px;font-size:7.55px;color:#363636;white-space:pre;overflow:hidden;transform:scaleY(1.1);transform-origin:0 12px;">Загрузка курсов не ...</div>
<div style="left:765.5px;top:413px;width:164.5px;line-height:20px;font-size:7.55px;color:#363636;white-space:pre;overflow:hidden;transform:scaleY(1.1);transform-origin:0 12px;">Задание завершено с ошибками</div>
<div style="left:935.1px;top:413px;width:84.89999999999998px;line-height:20px;font-size:7.55px;color:#363636;white-space:pre;overflow:hidden;transform:scaleY(1.1);transform-origin:0 12px;">31.10.2025 4:26:07</div>
<div style="left:13px;top:447px;width:1007px;height:1px;background:#e9e9e9;"></div>
<div style="left:17.4px;top:430px;width:120.6px;line-height:20px;font-size:7.55px;color:#363636;white-space:pre;overflow:hidden;transform:scaleY(1.1);transform-origin:0 12px;">ЗагрузкаКурсовВалют:Загрузк...</div>
<div style="left:144px;top:430px;width:124px;line-height:20px;font-size:7.55px;color:#363636;white-space:pre;overflow:hidden;transform:scaleY(1.1);transform-origin:0 12px;">Загрузка курсов валют</div>
<div style="left:355.6px;top:430px;width:91.39999999999998px;line-height:20px;font-size:7.55px;color:#363636;white-space:pre;overflow:hidden;transform:scaleY(1.1);transform-origin:0 12px;">dacc48c8-0e3e-41e4-9...</div>
<div style="left:452.3px;top:430px;width:218.7px;line-height:20px;font-size:7.55px;color:#363636;white-space:pre;overflow:hidden;transform:scaleY(1.1);transform-origin:0 12px;">РаботаСКурсамиВалютЛокализация.ПриЗагрузкеАктуаль...</div>
<div style="left:675.6px;top:430px;width:84.39999999999998px;line-height:20px;font-size:7.55px;color:#363636;white-space:pre;overflow:hidden;transform:scaleY(1.1);transform-origin:0 12px;">Загрузка курсов не ...</div>
<div style="left:765.5px;top:430px;width:164.5px;line-height:20px;font-size:7.55px;color:#363636;white-space:pre;overflow:hidden;transform:scaleY(1.1);transform-origin:0 12px;">Задание завершено с ошибками</div>
<div style="left:935.1px;top:430px;width:84.89999999999998px;line-height:20px;font-size:7.55px;color:#363636;white-space:pre;overflow:hidden;transform:scaleY(1.1);transform-origin:0 12px;">30.10.2025 4:26:07</div>
<div style="left:13px;top:464px;width:1007px;height:1px;background:#e9e9e9;"></div>
<div style="left:17.4px;top:447px;width:120.6px;line-height:20px;font-size:7.55px;color:#363636;white-space:pre;overflow:hidden;transform:scaleY(1.1);transform-origin:0 12px;">ЗагрузкаКурсовВалют:Загрузк...</div>
<div style="left:144px;top:447px;width:124px;line-height:20px;font-size:7.55px;color:#363636;white-space:pre;overflow:hidden;transform:scaleY(1.1);transform-origin:0 12px;">Загрузка курсов валют</div>
<div style="left:355.6px;top:447px;width:91.39999999999998px;line-height:20px;font-size:7.55px;color:#363636;white-space:pre;overflow:hidden;transform:scaleY(1.1);transform-origin:0 12px;">2e4272f2-8a25-4c1d-89...</div>
<div style="left:452.3px;top:447px;width:218.7px;line-height:20px;font-size:7.55px;color:#363636;white-space:pre;overflow:hidden;transform:scaleY(1.1);transform-origin:0 12px;">РаботаСКурсамиВалютЛокализация.ПриЗагрузкеАктуаль...</div>
<div style="left:675.6px;top:447px;width:84.39999999999998px;line-height:20px;font-size:7.55px;color:#363636;white-space:pre;overflow:hidden;transform:scaleY(1.1);transform-origin:0 12px;">Загрузка курсов не ...</div>
<div style="left:765.5px;top:447px;width:164.5px;line-height:20px;font-size:7.55px;color:#363636;white-space:pre;overflow:hidden;transform:scaleY(1.1);transform-origin:0 12px;">Задание завершено с ошибками</div>
<div style="left:935.1px;top:447px;width:84.89999999999998px;line-height:20px;font-size:7.55px;color:#363636;white-space:pre;overflow:hidden;transform:scaleY(1.1);transform-origin:0 12px;">29.10.2025 4:26:07</div>
<svg style="position:absolute;left:663px;top:411.5px;" width="9" height="12" viewBox="0 0 9 12"><path d="M0.7 0.7 V9.6 L2.9 7.6 L4.4 10.9 L5.9 10.2 L4.5 7.1 H7.4 Z" fill="#fff" stroke="#333" stroke-width="0.8" stroke-linejoin="round"/></svg>
</div></body></html>
